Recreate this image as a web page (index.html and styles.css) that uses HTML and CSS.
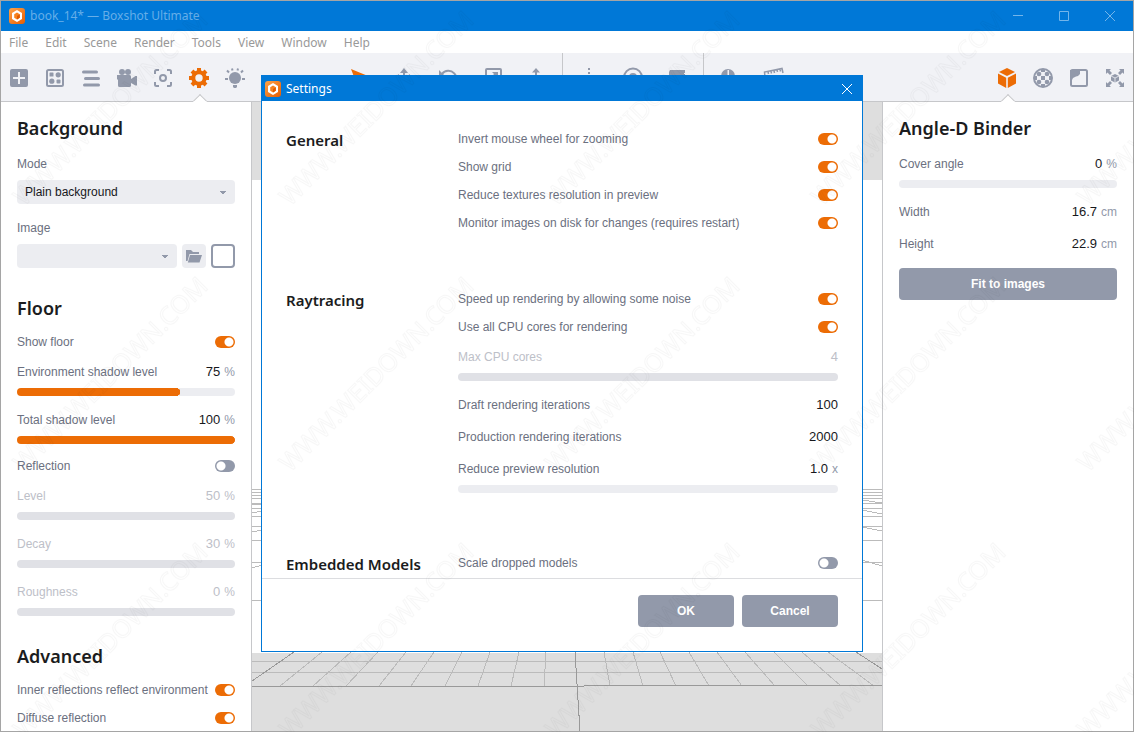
FILE: index.html
```html
<!DOCTYPE html>
<html lang="en">
<head>
<meta charset="utf-8">
<title>book_14* — Boxshot Ultimate</title>
<link rel="stylesheet" href="styles.css">
</head>
<body>
<svg class="defs" aria-hidden="true">
  <defs>
    <linearGradient id="logo-fill" x1="0" y1="0" x2="1" y2="1"><stop offset="0" stop-color="#ffa44a"/><stop offset="1" stop-color="#e65c00"/></linearGradient>
    <symbol id="logo" viewBox="0 0 16 16">
      <rect width="16" height="16" rx="3" fill="url(#logo-fill)"/>
      <path d="M8 2 13 5V11L8 14 3 11V5Z" fill="#fff"/>
      <path d="M8 4.600 10.800 6.300V9.700L8 11.400 5.200 9.700V6.300Z" fill="#f58220"/>
      <path d="M8 8 10.800 6.300V9.700L8 11.400Z" fill="#e05a00"/>
    </symbol>
  </defs>
</svg>
<div class="window">
  <header class="titlebar">
    <svg class="logo" aria-hidden="true"><use href="#logo"/></svg>
    <span class="titlebar-text">book_14* — Boxshot Ultimate</span>
    <div class="window-buttons">
      <button class="window-button" aria-label="Minimize"><svg viewBox="0 0 12 12"><path d="M1 5.500H11"/></svg></button>
      <button class="window-button" aria-label="Maximize"><svg viewBox="0 0 12 12"><path d="M1.500 1.500H10.500V10.500H1.500Z"/></svg></button>
      <button class="window-button" aria-label="Close"><svg viewBox="0 0 12 12"><path d="M1 1 11 11M11 1 1 11"/></svg></button>
    </div>
  </header>
  <nav class="menubar">
    <button>File</button><button>Edit</button><button>Scene</button><button>Render</button><button>Tools</button><button>View</button><button>Window</button><button>Help</button>
  </nav>
  <div class="toolbar">
    <div class="tools">
      <button class="tool" aria-label="Add"><svg viewBox="0 0 20 20"><path fill-rule="evenodd" d="M3 1H17A2 2 0 0 1 19 3V17A2 2 0 0 1 17 19H3A2 2 0 0 1 1 17V3A2 2 0 0 1 3 1ZM9 4V9H4V11H9V16H11V11H16V9H11V4Z"/></svg></button>
      <button class="tool" aria-label="Gallery"><svg viewBox="0 0 20 20"><rect class="line" x="2" y="2" width="16" height="16" rx="1.500"/><rect x="4.500" y="4.500" width="4" height="4" rx=".6"/><circle cx="13.200" cy="6.800" r="2.600"/><circle cx="6.800" cy="13.200" r="2.600"/><rect x="11.500" y="11.500" width="4" height="4" rx="1"/></svg></button>
      <button class="tool" aria-label="Scene tree"><svg viewBox="0 0 20 20"><path class="line wide" d="M2.500 4H15.500M4.500 10.500H17.500M3.500 17H17.500"/></svg></button>
      <button class="tool" aria-label="Camera"><svg viewBox="0 0 20 20"><circle cx="5" cy="4" r="3"/><circle cx="11" cy="4" r="3"/><path d="M1 7H12.500A1.500 1.500 0 0 1 14 8.500V11L18.500 8H20V17.500H18.500L14 15V17.500A1.500 1.500 0 0 1 12.500 19H2.500A1.500 1.500 0 0 1 1 17.500V12L0 11V7Z"/></svg></button>
      <button class="tool" aria-label="Focus"><svg viewBox="0 0 20 20"><path class="line" d="M2 6V3.500A1.500 1.500 0 0 1 3.500 2H6M14 2H16.500A1.500 1.500 0 0 1 18 3.500V6M18 14V16.500A1.500 1.500 0 0 1 16.500 18H14M6 18H3.500A1.500 1.500 0 0 1 2 16.500V14"/><circle class="line" cx="10" cy="10" r="3"/></svg></button>
      <button class="tool active" aria-label="Settings"><svg viewBox="0 0 20 20"><circle class="line ring" cx="10" cy="10" r="5.700"/><path class="line teeth" d="M10 0V4M10 16V20M0 10H4M16 10H20M3 3 5.500 5.500M14.500 14.500 17 17M17 3 14.500 5.500M5.500 14.500 3 17"/></svg></button>
      <button class="tool" aria-label="Lights"><svg viewBox="0 0 20 20"><circle cx="10" cy="10" r="6"/><path d="M8 17H12V19L11 20H9L8 19Z"/><path class="line" d="M0 11H3M17 11H20M2 2.500 4 4.500M18 2.500 16 4.500M7 .5 7.500 2.500M13 .5 12.500 2.500"/></svg></button>
    </div>
    <div class="tools tools-middle">
      <button class="tool active-mode" aria-label="Select"><svg viewBox="0 0 20 20"><path d="M1 1 18 8 11 11 8 19Z"/></svg></button>
      <button class="tool" aria-label="Move"><svg viewBox="0 0 20 20"><path d="M10 0 14 5H11V9H15V6L20 10 15 14V11H11V15H14L10 20 6 15H9V11H5V14L0 10 5 6V9H9V5H6Z"/></svg></button>
      <button class="tool" aria-label="Rotate"><svg viewBox="0 0 20 20"><path class="line" d="M4 6A8 8 0 1 1 3 14"/><path d="M1 2V9H8Z"/></svg></button>
      <button class="tool" aria-label="Scale"><svg viewBox="0 0 20 20"><rect class="line" x="4" y="1" width="15" height="16" rx="1"/><path d="M10 4H16V10L14 8 9 13 7.500 11.500 12 6Z"/></svg></button>
      <button class="tool" aria-label="Drop"><svg viewBox="0 0 20 20"><path d="M10 0 14 4.500H11V15.500H14L10 20 6 15.500H9V4.500H6Z"/></svg></button>
      <span class="separator"></span>
      <button class="tool" aria-label="Mirror"><svg viewBox="0 0 20 20"><path class="line dotted" d="M10 0V20"/></svg></button>
      <button class="tool" aria-label="Orbit"><svg viewBox="0 0 20 20"><circle class="line" cx="10" cy="9.500" r="9"/><circle cx="10" cy="9" r="4"/></svg></button>
      <button class="tool" aria-label="Material"><svg viewBox="0 0 20 20"><path d="M3 2H18V5H17V6H18V18H2V4Z"/></svg></button>
      <span class="separator"></span>
      <button class="tool" aria-label="Pivot"><svg viewBox="0 0 20 20"><circle cx="8" cy="8" r="7"/><path d="M7.500 2V14H9V2Z" fill="#f1f2f6"/></svg></button>
      <button class="tool" aria-label="Ruler"><svg viewBox="0 0 20 20"><path class="line thin" d="M1 9 .5 4 18 .5 19 5M4 3.500 4.500 6M7 3 7.500 5.500M10 2.500 10.500 5M13 1.500 13.500 4M16 1 16.500 3.500"/></svg></button>
    </div>
    <div class="tools tools-end">
      <button class="tool active" aria-label="Object"><svg viewBox="0 0 20 20"><path d="M10 0 18 4 10 8 2 4Z"/><path d="M1 5.500 9.200 9.800V20L1 15.500ZM19 5.500 10.800 9.800V20L19 15.500Z"/></svg></button>
      <button class="tool" aria-label="Materials"><svg viewBox="0 0 20 20"><circle class="line" cx="10" cy="10" r="9"/><path d="M8 8H12V12H8ZM8 1H12V4H8ZM8 16H12V19H8ZM1 8H4V12H1ZM16 8H19V12H16Z"/><circle cx="6" cy="6" r="2.300"/><circle cx="14" cy="6" r="2.300"/><circle cx="6" cy="14" r="2.300"/><circle cx="14" cy="14" r="2.300"/></svg></button>
      <button class="tool" aria-label="Backdrop"><svg viewBox="0 0 20 20"><rect class="line" x="2" y="2" width="16" height="16" rx="1.500"/><path d="M2 2H11V6L9 8 7 8.500 4 10 3 12H1V2Z"/></svg></button>
      <button class="tool" aria-label="Fit view"><svg viewBox="0 0 20 20"><path d="M1 1H6L4.500 2.500 7 5 5 7 2.500 4.500 1 6ZM19 1V6L17.500 4.500 15 7 13 5 15.500 2.500 14 1ZM19 19H14L15.500 17.500 13 15 15 13 17.500 15.500 19 14ZM1 19V14L2.500 15.500 5 13 7 15 4.500 17.500 6 19Z"/><path d="M10 6 14 8V12.500L10 14.500 6 12.500V8Z"/><path d="M6 8 10 10 14 8M10 10V14.500" fill="none" stroke="#f1f2f6" stroke-width=".8"/></svg></button>
    </div>
  </div>

  <main class="workspace">
    <aside class="panel">
      <h2>Background</h2>
      <div class="field">
        <label for="mode">Mode</label>
        <select id="mode"><option>Plain background</option></select>
      </div>
      <div class="field">
        <label for="image">Image</label>
        <div class="picker">
          <select id="image"><option></option></select>
          <button class="browse" aria-label="Browse"><svg viewBox="0 0 16 14"><path d="M0 1H5L7 3H13V5H3.500L1.500 12H0Z"/><path d="M4 6H16L13.500 13.500H1.800Z"/></svg></button>
          <button class="swatch" aria-label="Color"></button>
        </div>
      </div>
      <h2>Floor</h2>
      <div class="row"><label for="floor">Show floor</label><input class="toggle" type="checkbox" id="floor" checked></div>
      <div class="field">
        <div class="line-item"><label for="env">Environment shadow level</label><span class="value">75</span><span class="unit">%</span></div>
        <input class="slider" type="range" id="env" value="75" style="--v:75%">
      </div>
      <div class="field">
        <div class="line-item"><label for="total">Total shadow level</label><span class="value">100</span><span class="unit">%</span></div>
        <input class="slider" type="range" id="total" value="100" style="--v:100%">
      </div>
      <div class="row"><label for="reflection">Reflection</label><input class="toggle" type="checkbox" id="reflection"></div>
      <div class="field disabled">
        <div class="line-item"><label for="level">Level</label><span class="value">50</span><span class="unit">%</span></div>
        <input class="slider" type="range" id="level" value="50" disabled>
      </div>
      <div class="field disabled">
        <div class="line-item"><label for="decay">Decay</label><span class="value">30</span><span class="unit">%</span></div>
        <input class="slider" type="range" id="decay" value="30" disabled>
      </div>
      <div class="field disabled">
        <div class="line-item"><label for="rough">Roughness</label><span class="value">0</span><span class="unit">%</span></div>
        <input class="slider" type="range" id="rough" value="0" disabled>
      </div>
      <h2>Advanced</h2>
      <div class="row"><label for="inner">Inner reflections reflect environment</label><input class="toggle" type="checkbox" id="inner" checked></div>
      <div class="row"><label for="diffuse">Diffuse reflection</label><input class="toggle" type="checkbox" id="diffuse" checked></div>
    </aside>

    <section class="viewport" aria-label="Scene">
      <svg viewBox="0 0 630 629" preserveAspectRatio="none" shape-rendering="crispEdges">
        <path fill="#dedede" d="M0 0H630V78H0ZM0 551H630V629H0Z"/>
        <g fill="none" stroke="#bbb">
          <path d="M0 387.500H630M0 390.500H630M0 393.500H630M0 396.500H630M0 401.500H630M0 406.500H630M0 414.500H630M0 424.500H630M0 438.500H630M0 460.500H630M0 498.500H630"/>
          <path d="M0 403 10 402M0 411 10 409M0 430 10 428M0 466 10 463M610 398 630 401M610 408 630 412M610 425 630 429M610 458 630 464"/>
          <path d="M0 559.500H630M0 570.500H630"/>
          <path d="M28 584 70 550M61 584 99 550M94 584 126 550M127 584 154 550M159 584 182 550M193 584 210 550M226 584 238 550M259 584 267 550M292 584 294 550M358 584 352 550M391 584 381 550M424 584 408 550M457 584 437 550M490 584 465 550M523 584 493 550M556 584 522 550M589 584 550 550M622 584 576 550"/>
        </g>
        <path fill="none" stroke="#999" d="M0 584.500H332M332 583.500H630M0 579 42 550M604 550 630 567M323 550 328 629"/>
      </svg>
    </section>

    <aside class="panel panel-right">
      <h2>Angle-D Binder</h2>
      <div class="field">
        <div class="line-item"><label for="angle">Cover angle</label><span class="value">0</span><span class="unit">%</span></div>
        <input class="slider" type="range" id="angle" value="0">
      </div>
      <div class="row tall"><label for="width">Width</label><input class="value" id="width" value="16.7"><span class="unit">cm</span></div>
      <div class="row tall"><label for="height">Height</label><input class="value" id="height" value="22.9"><span class="unit">cm</span></div>
      <button class="button fit">Fit to images</button>
    </aside>
  </main>
</div>

<div class="dialog" role="dialog" aria-labelledby="dialog-title">
  <header class="dialog-title">
    <svg class="logo" aria-hidden="true"><use href="#logo"/></svg>
    <span id="dialog-title">Settings</span>
    <button class="dialog-close" aria-label="Close settings"><svg viewBox="0 0 12 12"><path d="M1 1 11 11M11 1 1 11"/></svg></button>
  </header>
  <div class="dialog-body">
    <section class="group">
      <h3>General</h3>
      <div>
        <div class="row"><label for="invert">Invert mouse wheel for zooming</label><input class="toggle" type="checkbox" id="invert" checked></div>
        <div class="row"><label for="grid">Show grid</label><input class="toggle" type="checkbox" id="grid" checked></div>
        <div class="row"><label for="textures">Reduce textures resolution in preview</label><input class="toggle" type="checkbox" id="textures" checked></div>
        <div class="row"><label for="monitor">Monitor images on disk for changes (requires restart)</label><input class="toggle" type="checkbox" id="monitor" checked></div>
      </div>
    </section>
    <section class="group">
      <h3>Raytracing</h3>
      <div>
        <div class="row"><label for="noise">Speed up rendering by allowing some noise</label><input class="toggle" type="checkbox" id="noise" checked></div>
        <div class="row"><label for="all-cores">Use all CPU cores for rendering</label><input class="toggle" type="checkbox" id="all-cores" checked></div>
        <div class="field disabled">
          <div class="line-item"><label for="cores">Max CPU cores</label><span class="value">4</span></div>
          <input class="slider" type="range" id="cores" disabled>
        </div>
        <div class="row tall"><label for="draft">Draft rendering iterations</label><input class="value" id="draft" value="100"></div>
        <div class="row tall"><label for="production">Production rendering iterations</label><input class="value" id="production" value="2000"></div>
        <div class="field">
          <div class="line-item"><label for="preview">Reduce preview resolution</label><span class="value">1.0</span><span class="unit">x</span></div>
          <input class="slider" type="range" id="preview" value="0">
        </div>
      </div>
    </section>
    <section class="group">
      <h3>Embedded Models</h3>
      <div>
        <div class="row"><label for="scale">Scale dropped models</label><input class="toggle" type="checkbox" id="scale"></div>
      </div>
    </section>
  </div>
  <footer class="dialog-footer">
    <button class="button">OK</button>
    <button class="button">Cancel</button>
  </footer>
</div>

<svg class="watermark" aria-hidden="true">
  <defs>
    <pattern id="mark" width="266" height="266" patternUnits="userSpaceOnUse" x="272" y="-58">
      <text transform="translate(18 265) rotate(-45)">WWW.WEIDOWN.COM</text>
    </pattern>
  </defs>
  <rect width="100%" height="100%" fill="url(#mark)"/>
</svg>
</body>
</html>
```
FILE: styles.css
```css
:root {
  --blue: #0078d7;
  --orange: #ec6c05;
  --grey: #9299aa;
  --text: #6b7080;
  --bar: #f1f2f6;
  --field: #ecedf1;
}

* { box-sizing: border-box; }

body {
  margin: 0;
  overflow: hidden;
  font: 12px/24px "Liberation Sans", Arial, sans-serif;
  color: var(--text);
}

button, input, select {
  font: inherit;
  margin: 0;
  padding: 0;
  border: 0;
  background: none;
  appearance: none;
}

.defs { position: absolute; width: 0; height: 0; }

.window {
  display: flex;
  flex-direction: column;
  height: 100vh;
  border: 1px solid #a5a5a5;
  background: #fff;
}

.titlebar {
  display: flex;
  flex: none;
  align-items: center;
  gap: 5px;
  height: 30px;
  padding-left: 8px;
  background: var(--blue);
  color: #66aee8;
  font: 12px/16px "Noto Sans", sans-serif;
}

.logo { flex: none; width: 16px; height: 16px; }

.window-buttons { display: flex; margin-left: auto; }

.window-button {
  display: grid;
  place-items: center;
  width: 46px;
  height: 30px;
}

.window-button svg, .dialog-close svg {
  width: 12px;
  height: 12px;
  fill: none;
  stroke: #73b5ea;
}

.menubar {
  display: flex;
  flex: none;
  gap: 17px;
  height: 22px;
  padding-left: 8px;
}

.menubar button {
  color: #999;
  font: 12px/24px "Noto Sans", sans-serif;
}

.toolbar {
  display: grid;
  flex: none;
  grid-template-columns: 1fr auto 1fr;
  height: 49px;
  border-bottom: 1px solid #c6c7ca;
  background: var(--bar);
}

.tools { display: flex; }
.tools-end { justify-content: flex-end; }

.tool {
  position: relative;
  display: grid;
  place-items: center;
  width: 36px;
  height: 48px;
  padding-top: 2px;
}

.tools-middle .tool { width: 44px; }

.tool svg {
  width: 20px;
  height: 20px;
  overflow: visible;
  fill: var(--grey);
  stroke: none;
}

.tool .line { fill: none; stroke: var(--grey); stroke-width: 2; }
.tool .wide { stroke-width: 3; stroke-linecap: round; }
.tool .thin { stroke-width: 1.5; }
.tool .dotted { stroke-dasharray: 2 2; }

.active svg, .active-mode svg { fill: var(--orange); }
.active .line { stroke: var(--orange); }
.tool .ring, .tool .teeth { stroke-width: 4; }

.active::after {
  content: "";
  position: absolute;
  bottom: -5px;
  left: 14px;
  width: 8px;
  height: 8px;
  transform: rotate(45deg);
  border: 1px solid #c6c7ca;
  border-right-color: transparent;
  border-bottom-color: transparent;
  background: #fff;
}

.separator { width: 1px; margin: 0 4px; background: #c6c7ca; }

.workspace {
  display: grid;
  flex: 1;
  grid-template-columns: 251px 1fr 251px;
  min-height: 0;
}

.panel {
  overflow: hidden;
  padding: 10px 16px 0;
  border-right: 1px solid #c6c7ca;
}

.panel-right {
  border-right: 0;
  border-left: 1px solid #c6c7ca;
}

h2 {
  margin: 16px 0 4px;
  color: #1b1c20;
  font: 600 18px/32px "Noto Sans", sans-serif;
}

h2:first-child { margin-top: 0; }

.row {
  display: flex;
  align-items: center;
  gap: 4px;
  height: 28px;
  overflow: hidden;
  white-space: nowrap;
}

.row.tall { height: 32px; }

.row label, .line-item label { flex: 1 0 auto; }

.field {
  display: flex;
  flex-direction: column;
  gap: 4px;
  padding: 4px 0 8px;
}

.line-item { display: flex; gap: 4px; }

.value { color: #17181c; font-size: 13px; text-align: right; }
input.value { width: 48px; height: 24px; }
.unit { color: var(--grey); }
.disabled, .disabled .value, .disabled .unit { color: #bdc0c8; }

.slider {
  display: block;
  width: 100%;
  height: 8px;
  border-radius: 4px;
  background:
    radial-gradient(circle 4px at calc(var(--v, 0%) - 4px) 50%, var(--orange) 95%, transparent),
    linear-gradient(to right, var(--orange) calc(var(--v, 0%) - 4px), var(--field) calc(var(--v, 0%) - 4px));
}

.slider:disabled { background: #e0e1e6; }
.slider::-webkit-slider-thumb { appearance: none; width: 8px; height: 8px; opacity: 0; }

.toggle {
  flex: none;
  width: 20px;
  height: 12px;
  border-radius: 6px;
  background: radial-gradient(circle 5px at 6px 6px, #fff 80%, transparent) var(--grey);
}

.toggle:checked {
  background: radial-gradient(circle 5px at 14px 6px, #fff 80%, transparent) var(--orange);
}

select {
  width: 100%;
  height: 24px;
  padding: 0 8px;
  border-radius: 4px;
  background:
    linear-gradient(to bottom left, var(--grey) 50%, transparent 52%) right 12px top 11px / 3px 4px no-repeat,
    linear-gradient(to bottom right, var(--grey) 50%, transparent 52%) right 9px top 11px / 3px 4px no-repeat,
    var(--field);
  color: #17181c;
}

.picker { display: flex; gap: 5px; }
.picker select { flex: 1; min-width: 0; }

.browse {
  display: grid;
  place-items: center;
  width: 24px;
  height: 24px;
  border-radius: 4px;
  background: var(--field);
}

.browse svg { width: 16px; height: 14px; fill: var(--grey); }

.swatch {
  width: 24px;
  height: 24px;
  border: 2px solid var(--grey);
  border-radius: 4px;
  background: #fff;
}

.viewport { min-width: 0; min-height: 0; }
.viewport svg { display: block; width: 100%; height: 100%; }

.button {
  width: 96px;
  height: 32px;
  border-radius: 4px;
  background: var(--grey);
  color: #fff;
  font-weight: bold;
}

.fit { width: 100%; margin-top: 8px; }

.dialog {
  position: absolute;
  top: 75px;
  left: 261px;
  display: flex;
  flex-direction: column;
  width: 602px;
  height: 577px;
  border: 1px solid var(--blue);
  background: #fff;
}

.dialog-title {
  display: flex;
  flex: none;
  align-items: center;
  gap: 5px;
  height: 25px;
  padding: 0 9px 0 3px;
  background: var(--blue);
  color: #fff;
  font: 12px/16px "Noto Sans", sans-serif;
}

.dialog-close { display: grid; margin-left: auto; }
.dialog-close svg { stroke: #fff; }

.dialog-body {
  display: flex;
  flex: 1;
  flex-direction: column;
  gap: 48px;
  min-height: 0;
  padding: 24px;
  overflow: hidden;
}

.group {
  display: grid;
  flex: none;
  grid-template-columns: 172px 1fr;
}

h3 {
  margin: 0;
  color: #1b1c20;
  font: 600 15px/30px "Noto Sans", sans-serif;
}

.dialog-footer {
  display: flex;
  flex: none;
  justify-content: flex-end;
  gap: 8px;
  padding: 16px 24px 24px;
  border-top: 1px solid #dcdde0;
}

.watermark {
  position: absolute;
  top: 0;
  left: 0;
  width: 100%;
  height: 100%;
  pointer-events: none;
}

.watermark text {
  fill: none;
  stroke: #000;
  stroke-opacity: .03;
  font: 25px "Noto Sans", sans-serif;
}
```
